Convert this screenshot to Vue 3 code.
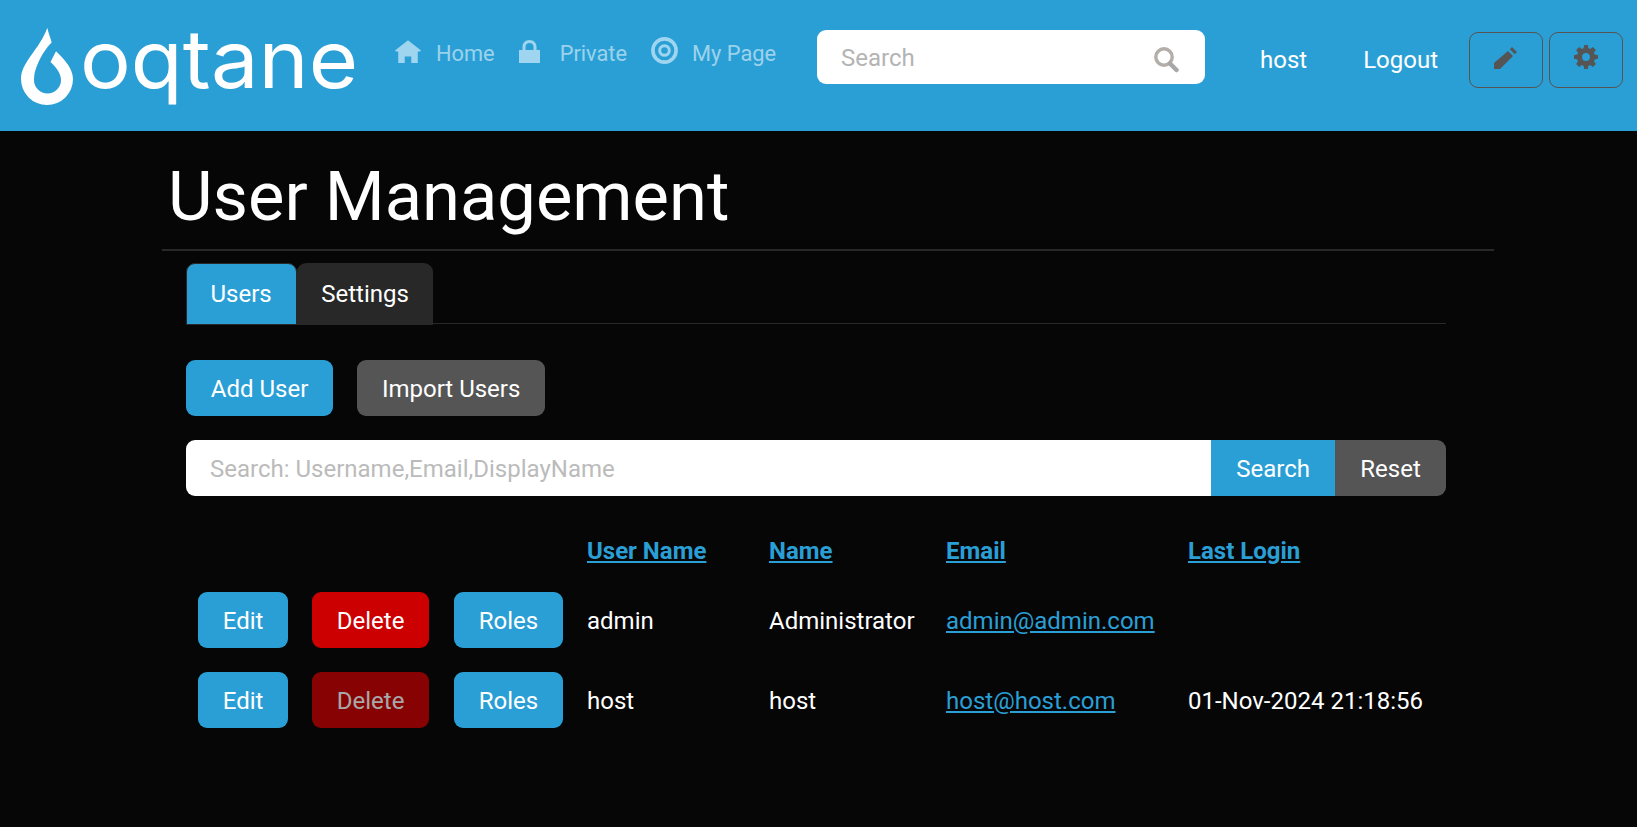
<template>
  <div class="page">
    <header class="topbar">
      <a class="logo">
        <svg class="drop" width="65" height="88" viewBox="0 0 65 88">
          <path fill="#fff" d="M32.300 5.700C33.500 11 35.500 16 36.700 20.500C30 27 24 37 20.500 48C19.500 50 19 55 19 58A13.500 13.500 0 1 0 46 58C46 52 42 46 35.500 40L41 29.300C50 38 58 47 58 57A26 26 0 1 1 6 57C6 40 25 27 32.300 5.700Z"/>
        </svg>
        <span class="wordmark">oqtane</span>
      </a>
      <nav class="menu">
        <a class="menu-link">
          <svg width="26" height="23" viewBox="0 0 8 7"><path fill="currentColor" d="M4 0L0 3.200L.3 3.500H1V7H3V5H5V7H7V3.500H7.700L8 3.200Z"/></svg>
          <span>Home</span>
        </a>
        <a class="menu-link">
          <svg class="icon-lock" width="21" height="23" viewBox="0 0 21 23"><path fill="currentColor" fill-rule="evenodd" d="M10.500 0C6.500 0 3.500 2.800 3.500 6.800V10H0V23H21V10H17.500V6.800C17.500 2.800 14.500 0 10.500 0ZM10.500 3C12.800 3 14.500 4.600 14.500 6.800V10H6.500V6.800C6.500 4.600 8.200 3 10.500 3Z"/></svg>
          <span>Private</span>
        </a>
        <a class="menu-link">
          <svg class="icon-target" width="27" height="27" viewBox="0 0 27 27"><circle cx="13.500" cy="13.500" r="11.600" fill="none" stroke="currentColor" stroke-width="3.600"/><circle cx="13.500" cy="13.500" r="4.800" fill="none" stroke="currentColor" stroke-width="3"/></svg>
          <span>My Page</span>
        </a>
      </nav>
      <div class="site-search">
        <input class="site-search-input" placeholder="Search" />
        <svg class="icon-search" width="25" height="26" viewBox="0 0 25 26"><circle cx="10" cy="10" r="8.200" fill="none" stroke="#b3aea8" stroke-width="3.400"/><path d="M16 16.500L22.500 23" stroke="#a8a8a8" stroke-width="4.500" stroke-linecap="round"/></svg>
      </div>
      <div class="user-links">
        <a class="user-link">host</a>
        <a class="user-link">Logout</a>
      </div>
      <div class="tools">
        <button class="tool-btn">
          <svg width="24" height="24" viewBox="0 0 24 24"><path fill="#555" d="M18 2L23 7L20.800 9.200L15.800 4.200ZM14 6L19 11L6 24H0V18Z"/></svg>
        </button>
        <button class="tool-btn">
          <svg width="24" height="24" viewBox="0 0 8 8"><path fill="#555" fill-rule="evenodd" d="M3.400 0L3.200 1.100C3 1.150 2.800 1.250 2.600 1.350L1.700 .7L.7 1.700L1.350 2.600C1.250 2.800 1.150 3 1.100 3.200L0 3.400V4.600L1.100 4.800C1.150 5 1.250 5.200 1.350 5.400L.7 6.300L1.700 7.300L2.600 6.650C2.800 6.750 3 6.850 3.200 6.900L3.400 8H4.600L4.800 6.900C5 6.850 5.200 6.750 5.400 6.650L6.300 7.300L7.300 6.300L6.650 5.400C6.750 5.200 6.850 5 6.900 4.800L8 4.600V3.400L6.900 3.200C6.850 3 6.750 2.800 6.650 2.600L7.300 1.700L6.300 .7L5.400 1.350C5.200 1.250 5 1.150 4.800 1.100L4.600 0ZM4 2.700A1.300 1.300 0 1 1 4 5.300A1.300 1.300 0 1 1 4 2.700Z"/></svg>
        </button>
      </div>
    </header>

    <main class="content">
      <h1 class="title">User Management</h1>
      <div class="panel">
        <ul class="tabs">
          <li class="tab active">Users</li>
          <li class="tab">Settings</li>
        </ul>
        <div class="actions">
          <button class="btn primary">Add User</button>
          <button class="btn secondary">Import Users</button>
        </div>
        <div class="search-group">
          <input class="search-input" placeholder="Search: Username,Email,DisplayName" />
          <button class="btn primary flat">Search</button>
          <button class="btn secondary flat-left">Reset</button>
        </div>
        <table class="users">
          <thead>
            <tr>
              <th></th>
              <th></th>
              <th></th>
              <th v-for="h in headers" :key="h"><a class="link">{{ h }}</a></th>
            </tr>
          </thead>
          <tbody>
            <tr v-for="u in users" :key="u.user">
              <td><button class="btn primary">Edit</button></td>
              <td><button class="btn danger" :class="{ disabled: u.locked }">Delete</button></td>
              <td><button class="btn primary">Roles</button></td>
              <td>{{ u.user }}</td>
              <td>{{ u.name }}</td>
              <td><a class="link">{{ u.email }}</a></td>
              <td>{{ u.login }}</td>
            </tr>
          </tbody>
        </table>
      </div>
    </main>
  </div>
</template>

<script setup>
const headers = ['User Name', 'Name', 'Email', 'Last Login'];

const users = [
  { user: 'admin', name: 'Administrator', email: 'admin@admin.com', login: '', locked: false },
  { user: 'host', name: 'host', email: 'host@host.com', login: '01-Nov-2024 21:18:56', locked: true }
];
</script>

<style>
html, body {
  margin: 0;
  background: #060606;
}
</style>

<style scoped>
* {
  box-sizing: border-box;
}

.page {
  min-height: 100vh;
  background: #060606;
  color: #fff;
  font-family: Roboto, sans-serif;
  font-size: 24px;
  line-height: 36px;
}

.topbar {
  display: flex;
  align-items: flex-start;
  height: 131px;
  background: #2a9fd6;
}

.logo {
  display: flex;
  align-items: flex-start;
  width: 395px;
  padding: 22px 0 0 15px;
}

.wordmark {
  margin-top: -3px;
  font-family: Inter, sans-serif;
  font-size: 80px;
  font-weight: 370;
  line-height: 80px;
  color: #fff;
  transform: scaleX(1.06);
  transform-origin: left center;
}

.menu {
  display: flex;
  width: 422px;
  padding-top: 36px;
  gap: 24px;
  font-size: 21.800px;
  line-height: 36px;
  color: rgba(255, 255, 255, 0.55);
}

.menu-link {
  display: flex;
  align-items: flex-start;
  gap: 15px;
}

.menu-link svg {
  margin-top: 4px;
  color: #9fd5ef;
}

.menu-link .icon-lock {
  margin-right: 5px;
}

.menu-link .icon-target {
  margin-top: 1px;
  margin-right: -1px;
}

.site-search {
  display: flex;
  align-items: center;
  justify-content: space-between;
  width: 388px;
  height: 54px;
  margin-top: 30px;
  padding: 0 26px 0 24px;
  background: #fff;
  border-radius: 9px;
}

.site-search-input {
  width: 200px;
  border: 0;
  outline: 0;
  padding: 2px 0 0;
  font: inherit;
  color: #333;
}

.site-search-input::placeholder {
  color: #b4b4b4;
  opacity: 1;
}

.icon-search {
  margin-top: 5px;
}

.user-links {
  display: flex;
  gap: 56px;
  width: 264px;
  padding: 42px 0 0 55px;
}

.tools {
  display: flex;
  gap: 6px;
  margin-top: 32px;
}

.tool-btn {
  display: flex;
  align-items: center;
  justify-content: center;
  width: 74px;
  height: 56px;
  padding: 0 0 6px;
  background: transparent;
  border: 1px solid #555;
  border-radius: 9px;
}

.content {
  width: 1332px;
  margin-left: 162px;
}

.title {
  margin: 0;
  height: 120px;
  padding: 23px 6px 0;
  font-size: 68.700px;
  font-weight: 400;
  line-height: 86px;
  border-bottom: 2px solid #282828;
}

.panel {
  width: 1260px;
  margin-left: 24px;
  padding-top: 12px;
}

.tabs {
  display: flex;
  margin: 0;
  padding: 0;
  list-style: none;
  border-bottom: 1px solid #282828;
  height: 61px;
}

.tab {
  height: 62px;
  padding: 13px 24px;
  background: #282828;
  border-radius: 9px 9px 0 0;
}

.tab.active {
  margin-right: 0.500px;
  background: #2a9fd6;
  border: 1px solid #282828;
  padding: 12px 24px 12px 23.500px;
}

.actions {
  display: flex;
  gap: 24px;
  margin-top: 36px;
}

.btn {
  display: inline-block;
  height: 56px;
  padding: 10px 23.800px 8px;
  border: 1px solid transparent;
  border-radius: 9px;
  color: #fff;
  font: inherit;
  white-space: nowrap;
}

.primary {
  background: #2a9fd6;
}

.secondary {
  background: #555;
}

.danger {
  background: #c00;
}

.danger.disabled {
  opacity: 0.65;
}

.search-group {
  display: flex;
  margin-top: 24px;
}

.search-input {
  flex: 1;
  min-width: 0;
  height: 56px;
  padding: 2px 24px 0;
  border: 0;
  outline: 0;
  border-radius: 9px 0 0 9px;
  background: #fff;
  font: inherit;
}

.search-input::placeholder {
  color: #bbb;
  opacity: 1;
}

.search-group .btn {
  padding-left: 24.200px;
  padding-right: 24.200px;
}

.flat {
  border-radius: 0;
}

.flat-left {
  border-radius: 0 9px 9px 0;
}

.users {
  width: 100%;
  margin-top: 18px;
  border-collapse: collapse;
  table-layout: fixed;
}

.users th {
  padding: 19px 12px 11px;
  text-align: left;
  font-weight: 700;
}

.users th:nth-child(1) { width: 114px; }
.users th:nth-child(2) { width: 142px; }
.users th:nth-child(3) { width: 133px; }
.users th:nth-child(4) { width: 182px; }
.users th:nth-child(5) { width: 177px; }
.users th:nth-child(6) { width: 242px; }

.users td {
  padding: 12px;
  white-space: nowrap;
}

.users td:nth-child(n + 4) {
  padding-top: 14px;
}

.link {
  color: #2a9fd6;
  text-decoration: underline;
}
</style>
